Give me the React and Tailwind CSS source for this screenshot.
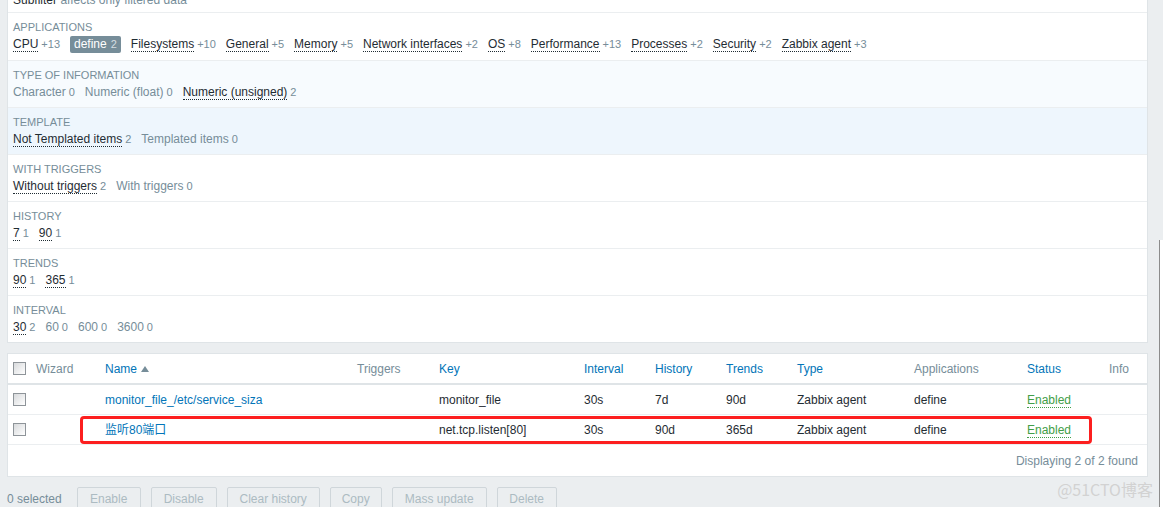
import React from "react"

const sections = [
  {
    label: "APPLICATIONS",
    h: "h-[48px]",
    items: [
      ["CPU", "+13"],
      ["define", "2", "sel"],
      ["Filesystems", "+10"],
      ["General", "+5"],
      ["Memory", "+5"],
      ["Network interfaces", "+2"],
      ["OS", "+8"],
      ["Performance", "+13"],
      ["Processes", "+2"],
      ["Security", "+2"],
      ["Zabbix agent", "+3"],
    ],
  },
  {
    label: "TYPE OF INFORMATION",
    bg: "bg-[#f7fbfe]",
    items: [
      ["Character", "0", "off"],
      ["Numeric (float)", "0", "off"],
      ["Numeric (unsigned)", "2"],
    ],
  },
  {
    label: "TEMPLATE",
    bg: "bg-[#eef6fd]",
    items: [
      ["Not Templated items", "2"],
      ["Templated items", "0", "off"],
    ],
  },
  {
    label: "WITH TRIGGERS",
    items: [
      ["Without triggers", "2"],
      ["With triggers", "0", "off"],
    ],
  },
  { label: "HISTORY", items: [["7", "1"], ["90", "1"]] },
  { label: "TRENDS", items: [["90", "1"], ["365", "1"]] },
  {
    label: "INTERVAL",
    last: true,
    items: [
      ["30", "2"],
      ["60", "0", "off"],
      ["600", "0", "off"],
      ["3600", "0", "off"],
    ],
  },
]

const cols = "grid grid-cols-[23px_69px_252px_82px_145px_71px_71px_71px_117px_113px_82px_1fr] items-center pl-[5px]"

function Item({ name, count, state }) {
  if (state === "sel") {
    return (
      <span className="inline-flex items-baseline gap-[4px] rounded-[2px] bg-[#768d99] px-[4px] leading-[17px] text-white">
        <span className="text-[12px]">{name}</span>
        <span className="text-[11px] text-[#d5dde1]">{count}</span>
      </span>
    )
  }
  return (
    <span className="inline-flex items-baseline gap-[3px]">
      {state === "off" ? (
        <span className="text-[12px] leading-[13px] text-[#768d99]">{name}</span>
      ) : (
        <span className="border-b border-dotted border-[#1f2c33] text-[12px] leading-[13px] text-[#1f2c33]">{name}</span>
      )}
      <span className="text-[11px] leading-[17px] text-[#768d99]">{count}</span>
    </span>
  )
}

function Checkbox() {
  return <span className="block h-[13px] w-[13px] border border-[#8e9499] bg-gradient-to-br from-[#d8dadc] to-white" />
}

function Btn({ w, children }) {
  return (
    <button className={`h-[24px] ${w} rounded-[2px] border border-[#cfd6da] bg-[#ebeef0] text-[12px] text-[#acbbc2]`}>
      {children}
    </button>
  )
}

export default function App() {
  return (
    <div className="relative h-[507px] overflow-hidden bg-[#ebeef0] font-[Liberation_Sans,Arial,Noto_Sans_CJK_SC,sans-serif] text-[12px]">
      <div className="ml-[7px] mt-[-10px] w-[1141px] border-x border-b border-[#dfe4e7] bg-white">
        <div className="h-[23px] border-b border-[#ebeef0] pl-[5px] pt-[2px] leading-[16px]">
          <span className="text-[#1f2c33]">Subfilter</span>{" "}
          <span className="text-[#768d99]">affects only filtered data</span>
        </div>
        {sections.map((s) => (
          <div
            key={s.label}
            className={`${s.h || (s.last ? "h-[46px]" : "h-[47px]")} ${s.last ? "" : "border-b border-[#ebeef0]"} ${s.bg || ""} pl-[5px] pt-[7px]`}
          >
            <div className="text-[11px] leading-[14px] text-[#768d99]">{s.label}</div>
            <div className="mt-[2px] flex h-[17px] items-baseline gap-x-[10px]">
              {s.items.map(([n, c, st], i) => (
                <Item key={i} name={n} count={c} state={st} />
              ))}
            </div>
          </div>
        ))}
      </div>

      <div className="ml-[7px] mt-[10px] w-[1141px] border border-[#dfe4e7] bg-white">
        <div className={`${cols} h-[31px] border-b-2 border-[#dfe4e7]`}>
          <Checkbox />
          <span className="text-[#768d99]">Wizard</span>
          <span className="flex items-center gap-[4px] text-[#0275b8]">
            Name
            <span className="h-0 w-0 border-x-[4px] border-b-[6px] border-x-transparent border-b-[#768d99]" />
          </span>
          <span className="text-[#768d99]">Triggers</span>
          <span className="text-[#0275b8]">Key</span>
          <span className="text-[#0275b8]">Interval</span>
          <span className="text-[#0275b8]">History</span>
          <span className="text-[#0275b8]">Trends</span>
          <span className="text-[#0275b8]">Type</span>
          <span className="text-[#768d99]">Applications</span>
          <span className="text-[#0275b8]">Status</span>
          <span className="text-[#768d99]">Info</span>
        </div>
        {[
          ["monitor_file_/etc/service_siza", "monitor_file", "30s", "7d", "90d"],
          ["监听80端口", "net.tcp.listen[80]", "30s", "90d", "365d"],
        ].map((r, i) => (
          <div key={i} className={`${cols} relative h-[30px] border-b border-[#ebeef0] text-[#1f2c33]`}>
            <Checkbox />
            <span />
            <span className="text-[#0275b8]">{r[0]}</span>
            <span />
            <span>{r[1]}</span>
            <span>{r[2]}</span>
            <span>{r[3]}</span>
            <span>{r[4]}</span>
            <span>Zabbix agent</span>
            <span>define</span>
            <span>
              <span className="border-b border-dotted border-[#429e47] text-[#429e47]">Enabled</span>
            </span>
            <span />
            {i === 1 && (
              <div className="pointer-events-none absolute left-[72px] top-[1px] h-[28px] w-[1012px] rounded-[4px] border-[3px] border-[#fc1f1f]" />
            )}
          </div>
        ))}
        <div className="flex h-[31px] items-center justify-end pr-[9px] text-[#768d99]">Displaying 2 of 2 found</div>
      </div>

      <div className="ml-[7px] mt-[10px] flex items-center">
        <span className="mr-[15px] text-[#768d99]">0 selected</span>
        <div className="flex gap-[10px]">
          <Btn w="w-[64px]">Enable</Btn>
          <Btn w="w-[66px]">Disable</Btn>
          <Btn w="w-[93px]">Clear history</Btn>
          <Btn w="w-[52px]">Copy</Btn>
          <Btn w="w-[95px]">Mass update</Btn>
          <Btn w="w-[60px]">Delete</Btn>
        </div>
      </div>

      <div className="absolute left-[1159px] top-[240px] h-[267px] w-[4px] border-l border-[#8c8c8c] bg-white" />
      <div className="absolute right-[10px] top-[477px] font-[Noto_Sans_CJK_SC,sans-serif] text-[16px] text-[#d2d2d2]">@51CTO博客</div>
    </div>
  )
}
